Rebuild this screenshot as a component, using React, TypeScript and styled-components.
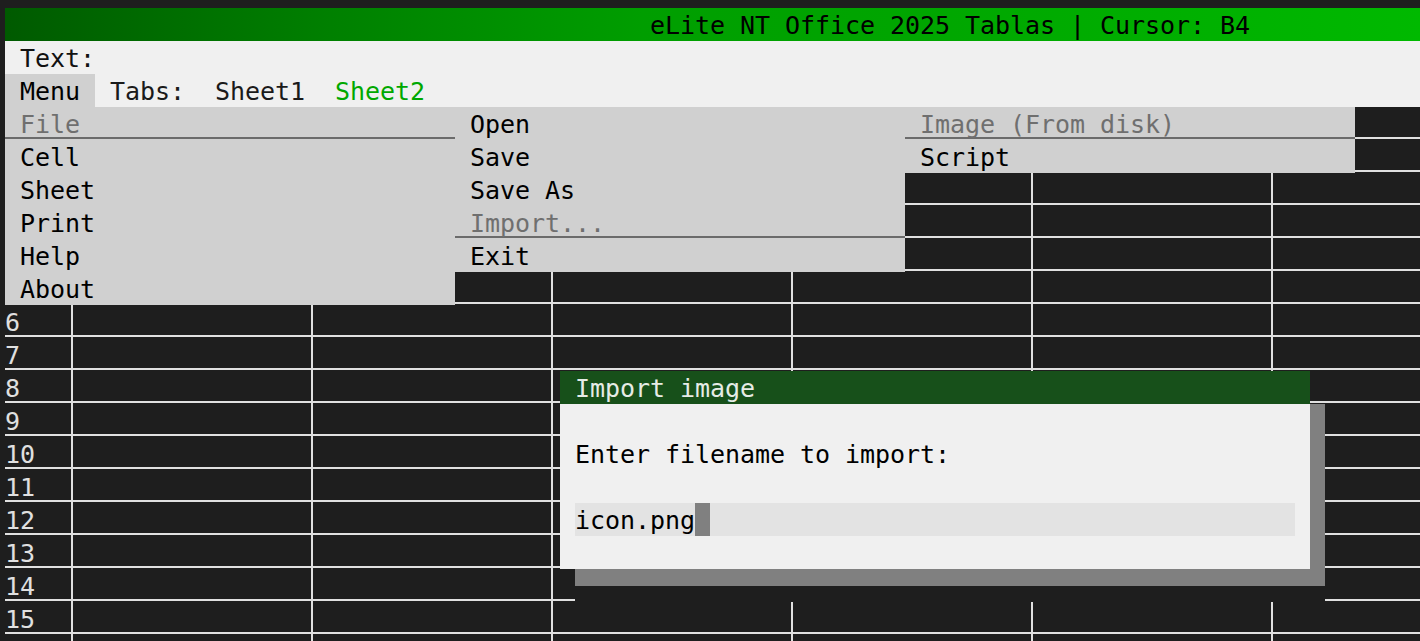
import React from "react";
import styled, { createGlobalStyle } from "styled-components";

const CW = 15;
const RH = 33;
const LINE = "#e0e0e0";

const GlobalStyle = createGlobalStyle`
  html, body { margin: 0; padding: 0; background: #1e1e1e; }
  body { overflow: hidden; }
`;

const Screen = styled.div`
  width: 1420px;
  height: 641px;
  overflow: hidden;
  box-sizing: border-box;
  padding: 8px 0 0 5px;
  background: #1e1e1e;
  font-family: "DejaVu Sans Mono", "Liberation Mono", monospace;
  font-size: 25px;
  letter-spacing: -0.051px;
  line-height: 35px;
  white-space: pre;
`;

const TitleBar = styled.div`
  height: ${RH}px;
  overflow: hidden;
  padding-left: ${43 * CW}px;
  color: #000;
  background: linear-gradient(
    to right,
    #005a00 0%,
    #008000 23%,
    #009e00 45%,
    #00a600 65%,
    #00b900 100%
  );
`;

const CommandLine = styled.div`
  height: ${RH}px;
  overflow: hidden;
  padding-left: ${CW}px;
  background: #f0f0f0;
  color: #111;
`;

const TabBar = styled.div`
  display: flex;
  height: ${RH}px;
  overflow: hidden;
  background: #f0f0f0;
  color: #1a1a1a;
`;

const MenuTab = styled.div`
  padding: 0 ${CW}px;
  background: #d0d0d0;
  color: #000;
`;

const TabItem = styled.div<{ $gap: number; $active?: boolean }>`
  margin-left: ${(p) => p.$gap * CW}px;
  color: ${(p) => (p.$active ? "#00a800" : "#1a1a1a")};
`;

const SheetArea = styled.div`
  position: relative;
`;

const GridRow = styled.div`
  display: flex;
  height: ${RH}px;
  overflow: hidden;
  background: linear-gradient(
    to bottom,
    transparent 30px,
    ${LINE} 30px,
    ${LINE} 32px,
    transparent 32px
  );
  color: ${LINE};
`;

const RowNum = styled.div`
  flex: 0 0 ${4 * CW}px;
`;

const ColSep = styled.div`
  flex: 0 0 ${CW}px;
  background: linear-gradient(${LINE}, ${LINE}) no-repeat 6px 0 / 2px 100%;
`;

const Cell = styled.div`
  flex: 0 0 ${15 * CW}px;
  overflow: hidden;
`;

const MenuPanel = styled.div<{ $left: number }>`
  position: absolute;
  top: 0;
  left: ${(p) => p.$left}px;
  width: ${30 * CW}px;
  background: #d0d0d0;
  color: #000;
`;

const MenuItem = styled.div<{ $muted?: boolean }>`
  height: ${RH}px;
  overflow: hidden;
  padding-left: ${CW}px;
  color: ${(p) => (p.$muted ? "#6f6f6f" : "#000")};
  background: ${(p) =>
    p.$muted
      ? "linear-gradient(to bottom, transparent 30px, #6b6b6b 30px, #6b6b6b 32px, transparent 32px)"
      : "none"};
`;

const DialogShadow = styled.div`
  position: absolute;
  left: ${38 * CW}px;
  top: ${9 * RH}px;
  width: ${50 * CW}px;
  height: ${6 * RH}px;
  background: linear-gradient(to bottom, #808080 182px, #1e1e1e 182px);
`;

const Dialog = styled.div`
  position: absolute;
  left: ${37 * CW}px;
  top: ${8 * RH}px;
  width: ${50 * CW}px;
`;

const DialogTitle = styled.div`
  height: ${RH}px;
  overflow: hidden;
  padding-left: ${CW}px;
  background: #17501a;
  color: #e6ece6;
`;

const DialogBody = styled.div`
  background: #f0f0f0;
  color: #000;
  padding: ${RH}px ${CW}px;
  display: flex;
  flex-direction: column;
  gap: ${RH}px;
`;

const Prompt = styled.div`
  height: ${RH}px;
  overflow: hidden;
`;

const InputField = styled.div`
  display: flex;
  width: ${48 * CW}px;
  height: ${RH}px;
  overflow: hidden;
  background: #e3e3e3;
`;

const Caret = styled.span`
  display: inline-block;
  width: ${CW}px;
  height: ${RH}px;
  background: #808080;
`;

const COLS = ["A", "B", "C", "D", "E", "F"];

function SheetRow({ label }: { label: string }) {
  return (
    <GridRow>
      <RowNum>{label}</RowNum>
      {COLS.map((c) => (
        <React.Fragment key={c}>
          <ColSep />
          <Cell />
        </React.Fragment>
      ))}
    </GridRow>
  );
}

export default function App() {
  const rows = Array.from({ length: 15 }, (_, i) => String(i + 1));
  return (
    <>
      <GlobalStyle />
      <Screen>
        <TitleBar>eLite NT Office 2025 Tablas | Cursor: B4</TitleBar>
        <CommandLine>Text:</CommandLine>
        <TabBar>
          <MenuTab>Menu</MenuTab>
          <TabItem $gap={1}>Tabs:</TabItem>
          <TabItem $gap={2}>Sheet1</TabItem>
          <TabItem $gap={2} $active>
            Sheet2
          </TabItem>
        </TabBar>
        <SheetArea>
          <SheetRow label="" />
          {rows.map((r) => (
            <SheetRow key={r} label={r} />
          ))}
          <SheetRow label="" />

          <MenuPanel $left={0}>
            <MenuItem $muted>File</MenuItem>
            <MenuItem>Cell</MenuItem>
            <MenuItem>Sheet</MenuItem>
            <MenuItem>Print</MenuItem>
            <MenuItem>Help</MenuItem>
            <MenuItem>About</MenuItem>
          </MenuPanel>
          <MenuPanel $left={30 * CW}>
            <MenuItem>Open</MenuItem>
            <MenuItem>Save</MenuItem>
            <MenuItem>Save As</MenuItem>
            <MenuItem $muted>Import...</MenuItem>
            <MenuItem>Exit</MenuItem>
          </MenuPanel>
          <MenuPanel $left={60 * CW}>
            <MenuItem $muted>Image (From disk)</MenuItem>
            <MenuItem>Script</MenuItem>
          </MenuPanel>

          <DialogShadow />
          <Dialog>
            <DialogTitle>Import image</DialogTitle>
            <DialogBody>
              <Prompt>Enter filename to import:</Prompt>
              <InputField>
                icon.png
                <Caret />
              </InputField>
            </DialogBody>
          </Dialog>
        </SheetArea>
      </Screen>
    </>
  );
}
